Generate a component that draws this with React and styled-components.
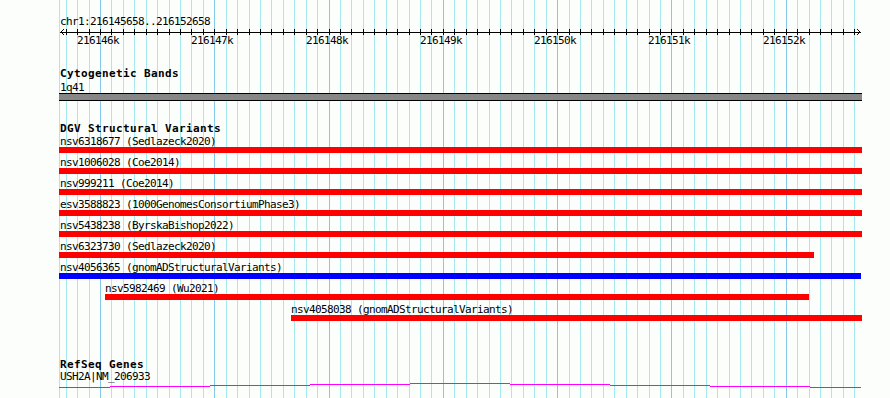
import React from "react";
import styled, { createGlobalStyle } from "styled-components";

const PAGE_W = 890;
const PAGE_H = 398;
const ORIGIN = 59; // left edge of the track panel
const PANEL_W = 803;
const START = 216145658;
const PX_PER_BP = 800 / 7000;
const bpToX = (bp) => 100 + (bp - 216146000) * PX_PER_BP;

const GlobalStyle = createGlobalStyle`
  html, body { margin: 0; padding: 0; background: #fcfefc; }
  body { font-family: "DejaVu Sans Mono", "Liberation Mono", monospace; }
`;

const Page = styled.div`
  position: relative;
  width: ${PAGE_W}px;
  height: ${PAGE_H}px;
  overflow: hidden;
  background: #fcfefc;
  color: #000;
`;

const GridLayer = styled.svg`
  position: absolute;
  left: 0;
  top: 0;
  z-index: 0;
  shape-rendering: crispEdges;
`;

const Content = styled.div`
  position: relative;
  z-index: 1;
  margin-left: ${ORIGIN}px;
  width: ${PANEL_W}px;
  padding-top: 15px;
  display: flex;
  flex-direction: column;
`;

const Text = styled.div`
  font-family: "DejaVu Sans Mono", "Liberation Mono", monospace;
  font-size: 11px;
  letter-spacing: -0.62px;
  line-height: 13px;
  height: ${(p) => p.$h ?? 13}px;
  margin-top: ${(p) => p.$mt ?? 0}px;
  padding-left: ${(p) => p.$indent ?? 1}px;
  white-space: nowrap;
`;

const Heading = styled(Text)`
  font-weight: bold;
  letter-spacing: 0.38px;
`;

const Ruler = styled.div`
  position: relative;
  height: 20px;
`;

const TickLabel = styled.span`
  position: absolute;
  top: 6px;
  font-family: "DejaVu Sans Mono", "Liberation Mono", monospace;
  font-size: 11px;
  letter-spacing: -0.62px;
  line-height: 13px;
  white-space: nowrap;
`;

const Band = styled.div`
  height: 6px;
  background: #878787;
  border-top: 1px solid #000;
  border-bottom: 1px solid #000;
`;

const FeatureRow = styled.div`
  display: flex;
  flex-direction: column;
  padding-left: ${(p) => p.$offset}px;
  margin-bottom: 3px;
`;

const Bar = styled.div`
  height: 6px;
  width: ${(p) => p.$width}px;
  background: ${(p) => (p.$kind === "gain" ? "#0000ff" : "#ff0000")};
`;

const GeneLine = styled.svg`
  display: block;
  shape-rendering: crispEdges;
`;

const variants = [
  { id: "nsv6318677", src: "Sedlazeck2020", x0: 59, x1: 862 },
  { id: "nsv1006028", src: "Coe2014", x0: 59, x1: 862 },
  { id: "nsv999211", src: "Coe2014", x0: 59, x1: 862 },
  { id: "esv3588823", src: "1000GenomesConsortiumPhase3", x0: 59, x1: 862 },
  { id: "nsv5438238", src: "ByrskaBishop2022", x0: 59, x1: 862 },
  { id: "nsv6323730", src: "Sedlazeck2020", x0: 59, x1: 814 },
  { id: "nsv4056365", src: "gnomADStructuralVariants", x0: 59, x1: 861, kind: "gain" },
  { id: "nsv5982469", src: "Wu2021", x0: 105, x1: 809 },
  { id: "nsv4058038", src: "gnomADStructuralVariants", x0: 291, x1: 862 },
];

const gridKs = Array.from({ length: 70 }, (_, i) => i - 3);
const majors = [0, 1, 2, 3, 4, 5, 6];

// gene intron line: gentle arc drawn in 1px steps (page x ranges, row offset)
const geneSegments = [
  [59, 110, 4],
  [110, 210, 3],
  [210, 310, 2],
  [310, 410, 1],
  [410, 510, 0],
  [510, 610, 1],
  [610, 710, 2],
  [710, 810, 3],
  [810, 861, 4],
];

function Grid() {
  return (
    <GridLayer width={PAGE_W} height={PAGE_H}>
      <rect x={59} y={0} width={1} height={PAGE_H} fill="#a6e9ee" />
      {gridKs.map((k) => (
        <rect
          key={k}
          x={Math.round(100 + k * 100 * PX_PER_BP)}
          y={0}
          width={1}
          height={PAGE_H}
          fill={k % 10 === 0 ? "#86c9ea" : "#a6e9ee"}
        />
      ))}
    </GridLayer>
  );
}

function Axis() {
  return (
    <Ruler>
      <svg width={PANEL_W} height={8} style={{ display: "block", shapeRendering: "crispEdges" }}>
        <rect x={1} y={4} width={801} height={1} fill="#000" />
        {gridKs.map((k) => (
          <rect
            key={k}
            x={Math.round(100 + k * 100 * PX_PER_BP) - ORIGIN}
            y={1}
            width={1}
            height={6}
            fill="#000"
          />
        ))}
        <polyline points="5,1 2,4 5,7" fill="none" stroke="#000" strokeWidth="1" />
        <polyline points="798,1 801,4 798,7" fill="none" stroke="#000" strokeWidth="1" />
      </svg>
      {majors.map((m) => (
        <TickLabel key={m} style={{ left: Math.round(bpToX(216146000 + m * 1000)) - ORIGIN - 23 }}>
          {`${216146 + m}k`}
        </TickLabel>
      ))}
    </Ruler>
  );
}

export default function App() {
  return (
    <Page>
      <GlobalStyle />
      <Grid />
      <Content>
        <Text>{`chr1:${START}..${START + 7000}`}</Text>
        <Axis />

        <Heading $mt={19}>Cytogenetic Bands</Heading>
        <Text $mt={1} $h={12}>1q41</Text>
        <Band />

        <Heading $mt={21}>DGV Structural Variants</Heading>
        {variants.map((v) => (
          <FeatureRow key={v.id} $offset={v.x0 - ORIGIN}>
            <Text $h={12} $indent={v.x0 === ORIGIN ? 1 : 0}>{`${v.id} (${v.src})`}</Text>
            <Bar $width={v.x1 - v.x0} $kind={v.kind} />
          </FeatureRow>
        ))}

        <Heading $mt={34} $h={12}>RefSeq Genes</Heading>
        <Text>USH2A|NM_206933</Text>
        <GeneLine width={PANEL_W} height={6}>
          {geneSegments.map(([a, b, y]) => (
            <rect key={a} x={a - ORIGIN} y={y} width={b - a} height={1} fill="#ff00ff" />
          ))}
        </GeneLine>
      </Content>
    </Page>
  );
}
